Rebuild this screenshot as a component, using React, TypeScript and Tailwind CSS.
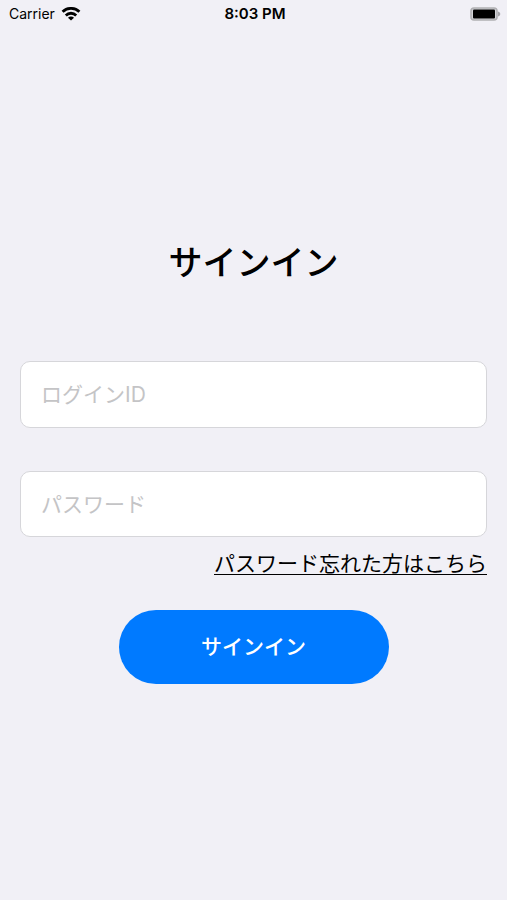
import React from 'react';

function StatusBar() {
  return (
    <header className="grid h-7 grid-cols-3 items-center pl-[9px] pr-[6px] text-black">
      <div className="flex items-center gap-[6px] text-sm">
        <span>Carrier</span>
        <svg className="h-[14px] w-5" viewBox="0 0 20 14" fill="none" stroke="#000" strokeWidth="2.8" aria-hidden="true">
          <path d="M1.6 4.8a12 12 0 0 1 16.8 0" />
          <path d="M4.8 8.4a7.4 7.4 0 0 1 10.4 0" />
          <path d="M10 13.6L7 10.8a4.2 4.2 0 0 1 6 0z" fill="#000" stroke="none" />
        </svg>
      </div>
      <span className="text-center text-[15px] font-semibold">8:03 PM</span>
      <svg className="h-[14px] w-[31px] justify-self-end" viewBox="0 0 31 14" aria-hidden="true">
        <rect x="1" y="1" width="26" height="12" rx="3" fill="#d4d4d8" stroke="#b0b0b3" strokeWidth="1.6" />
        <rect x="3" y="2.5" width="22" height="9" rx="1" fill="#000" />
        <path d="M28 4.5c3 1 3 4 0 5z" fill="#a5a5a9" />
      </svg>
    </header>
  );
}

export default function App() {
  const inputClass =
    'block w-full rounded-[10px] border border-[#d6d6da] bg-white px-5 text-[21px] text-black outline-none placeholder:text-[#c4c4c6]';

  return (
    <div className="min-h-screen bg-[#f1f0f6] font-['Inter','Noto_Sans_CJK_JP',sans-serif]">
      <StatusBar />

      <main className="px-5 pt-[209px]">
        <h1 className="text-center text-[34px] leading-[52px] font-medium text-black">サインイン</h1>

        <form className="mt-[72px]" onSubmit={(e) => e.preventDefault()}>
          <input type="text" aria-label="ログインID" placeholder="ログインID" className={`${inputClass} h-[67px]`} />
          <input type="password" aria-label="パスワード" placeholder="パスワード" className={`${inputClass} mt-[43px] h-[66px]`} />

          <div className="mt-[13px] text-right leading-7">
            <a href="#" className="text-[21px] text-black underline decoration-1 underline-offset-3">
              パスワード忘れた方はこちら
            </a>
          </div>

          <button type="submit" className="mx-auto mt-[31px] block h-[74px] w-[270px] rounded-full bg-[#007aff] text-[21px] font-medium text-white">
            サインイン
          </button>
        </form>
      </main>
    </div>
  );
}
